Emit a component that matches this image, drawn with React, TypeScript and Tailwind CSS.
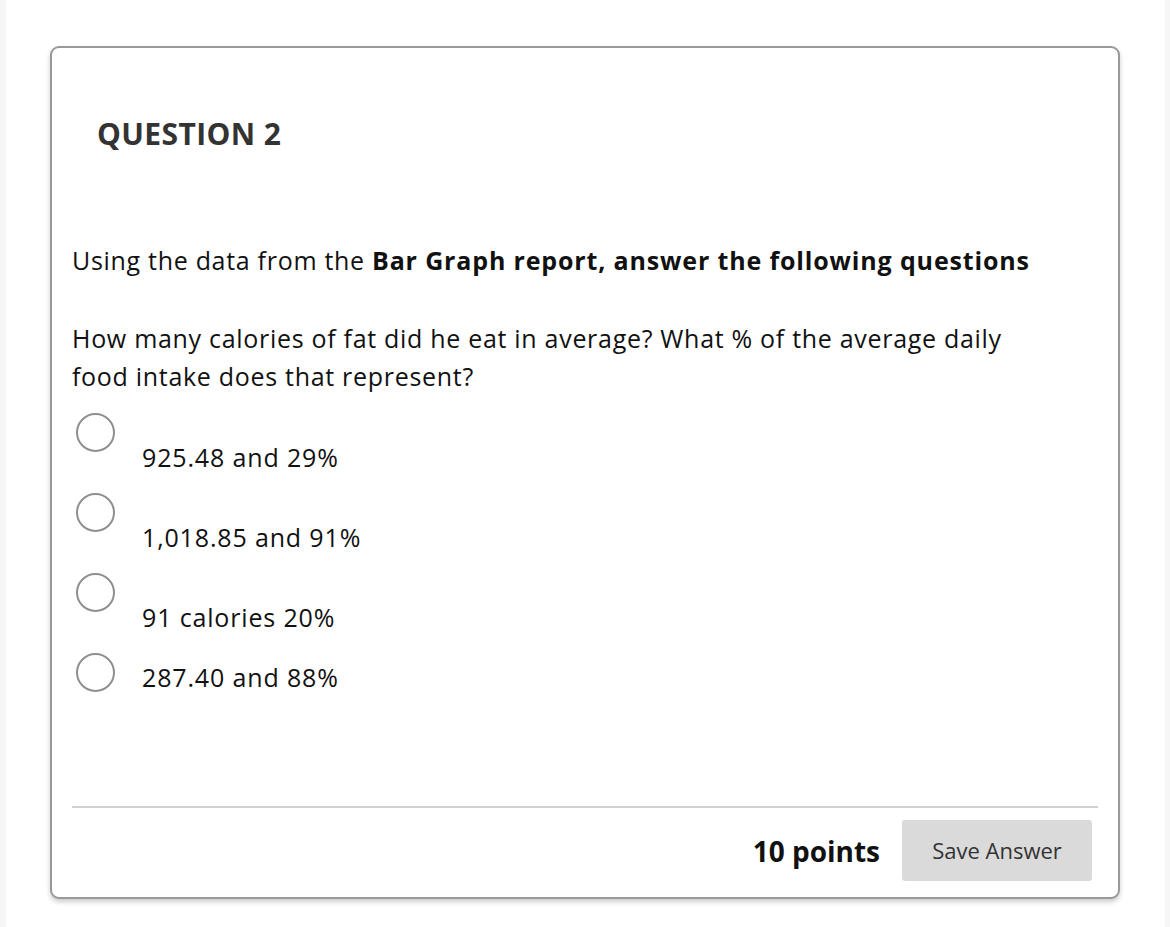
const options = [
  { label: "925.48 and 29%", offset: "mt-[25px]" },
  { label: "1,018.85 and 91%", offset: "mt-[25px]" },
  { label: "91 calories 20%", offset: "mt-[25px]" },
  { label: "287.40 and 88%", offset: "mt-[5px]" },
];

export default function App() {
  return (
    <div className="flex min-h-[927px] w-[1170px] bg-white font-['Open_Sans',sans-serif]">
      <div className="w-[6px] shrink-0 bg-[#f6f6f6]" />
      <div className="flex-1 pl-[44px] pt-[46px]">
        <div className="flex h-[853px] w-[1070px] flex-col rounded-[9px] border-2 border-[#999] bg-white px-[20px] shadow-[0_3px_5px_rgba(0,0,0,0.2)]">
          <h2 className="mt-[67px] pl-[25px] text-[30px] font-bold leading-[38px] tracking-[0.4px] text-[#333]">
            QUESTION 2
          </h2>
          <p className="mt-[88px] text-[25px] leading-[38px] tracking-[0.7px] text-[#111]">
            Using the data from the{" "}
            <b className="tracking-[0.85px]">Bar Graph report, answer the following questions</b>
          </p>
          <p className="mt-[40px] text-[25px] leading-[38px] tracking-[0.7px] text-[#111]">
            How many calories of fat did he eat in average? What % of the average daily
            <br />
            food intake does that represent?
          </p>
          <div className="mt-[18px] flex flex-col">
            {options.map((o) => (
              <label key={o.label} className="flex h-[80px] items-start">
                <span className="ml-[4px] h-[39px] w-[39px] shrink-0 rounded-full border-2 border-[#8f8f8f] bg-white" />
                <span className={`ml-[27px] text-[25px] leading-[38px] tracking-[0.85px] text-[#111] ${o.offset}`}>
                  {o.label}
                </span>
              </label>
            ))}
          </div>
          <div className="mt-[73px] border-t-2 border-[#d0d0d0]" />
          <div className="mt-[12px] flex items-center justify-end pr-[6px]">
            <span className="mr-[22px] text-[28px] font-bold text-[#111]">10 points</span>
            <button className="h-[61px] w-[190px] rounded-[3px] bg-[#dadada] text-[22px] text-[#333]">
              Save Answer
            </button>
          </div>
        </div>
      </div>
      <div className="w-[5px] shrink-0 bg-[#f6f6f6]" />
    </div>
  );
}
